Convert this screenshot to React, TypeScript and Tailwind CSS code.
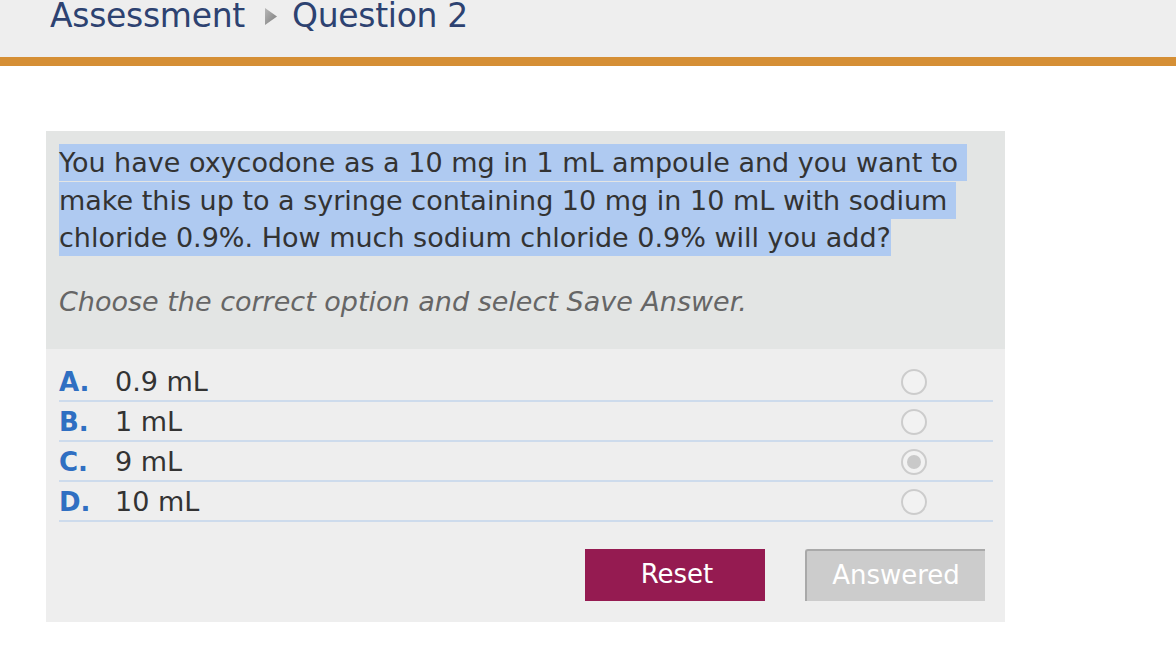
import React from 'react'

const options = [
  { key: 'A', label: '0.9 mL', checked: false },
  { key: 'B', label: '1 mL', checked: false },
  { key: 'C', label: '9 mL', checked: true },
  { key: 'D', label: '10 mL', checked: false },
]

const lines = [
  'You have oxycodone as a 10 mg in 1 mL ampoule and you want to\u00a0',
  'make this up to a syringe containing 10 mg in 10 mL with sodium\u00a0',
  'chloride 0.9%. How much sodium chloride 0.9% will you add?',
]

function Radio({ checked }: { checked: boolean }) {
  return (
    <span className="size-[26px] rounded-full border-2 border-[#cccccc] bg-[#f2f2f2] flex items-center justify-center">
      {checked && <span className="size-[14px] rounded-full bg-[#c9c9c9]" />}
    </span>
  )
}

export default function App() {
  return (
    <div className="min-h-screen bg-white text-[#333333]" style={{ fontFamily: '"DejaVu Sans", Verdana, sans-serif' }}>

      {/* ── Breadcrumb header ─────────────────────────────────── */}
      <header className="flex items-start bg-[#eeeeee] h-[66px] border-b-[9px] border-[#d58f35]">
        <div className="flex items-start pl-[50px] -mt-[1px] text-[33px] leading-none tracking-[-0.3px] text-[#2d4271]">
          <span>Assessment</span>
          <svg width="12" height="17" viewBox="0 0 12 17" className="ml-[20px] mr-[15px] mt-[9px]">
            <defs>
              <linearGradient id="tri" x1="0" y1="0" x2="1" y2="1">
                <stop offset="0" stopColor="#b8b8b8" />
                <stop offset="1" stopColor="#7a7a7a" />
              </linearGradient>
            </defs>
            <path d="M0 0 L12 8.5 L0 17 Z" fill="url(#tri)" />
          </svg>
          <span>Question 2</span>
        </div>
      </header>

      {/* ── Question card ─────────────────────────────────────── */}
      <main className="pt-[65px] pl-[46px]">
        <div className="w-[959px] bg-[#eeeeee]">
          <div className="bg-[#e3e5e4] px-[13px] pt-[13px] pb-[32px]">
            <p className="text-[27px] leading-[37.5px]">
              {lines.map((l, i) => (
                <React.Fragment key={i}>
                  <span className="bg-[#afcaf1] py-[3px] whitespace-pre">{l}</span>
                  {i < lines.length - 1 && <br />}
                </React.Fragment>
              ))}
            </p>
            <p className="mt-[30px] text-[27px] leading-[30px] italic text-[#666666]">
              Choose the correct option and select Save Answer.
            </p>
          </div>

          <div className="pl-[13px] pr-[12px] pt-[13px]">
            {options.map(o => (
              <div key={o.key} className="flex items-center h-[40px] pt-[3px] border-b-2 border-[#cddbec]">
                <span className="w-[56px] text-[26px] font-bold text-[#2f6fc2]">{o.key}.</span>
                <span className="text-[27px]">{o.label}</span>
                <span className="ml-auto mr-[66px]">
                  <Radio checked={o.checked} />
                </span>
              </div>
            ))}
          </div>

          <div className="flex justify-end gap-[40px] pr-[20px] pt-[27px] pb-[21px]">
            <button className="w-[180px] h-[52px] pl-[4px] bg-[#951b51] text-white text-[26px]">Reset</button>
            <button className="w-[180px] h-[52px] bg-[#cccccc] text-white text-[26px] border-l-2 border-t-2 border-[#a9a9a9] rounded-tl-[3px]">Answered</button>
          </div>
        </div>
      </main>
    </div>
  )
}
